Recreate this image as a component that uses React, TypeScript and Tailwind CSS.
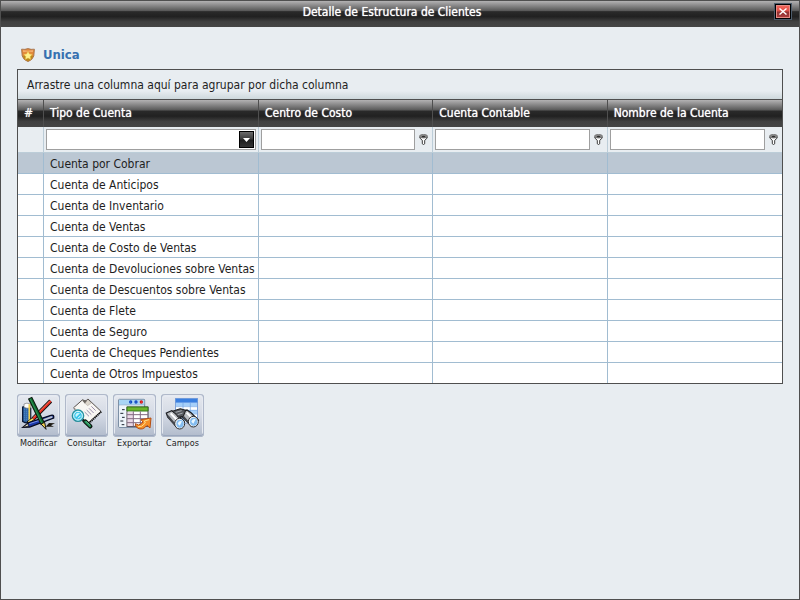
import { useState } from "react";
import type { ReactNode } from "react";
import { clsx } from "clsx";

const ACCOUNTS = [
  "Cuenta por Cobrar",
  "Cuenta de Anticipos",
  "Cuenta de Inventario",
  "Cuenta de Ventas",
  "Cuenta de Costo de Ventas",
  "Cuenta de Devoluciones sobre Ventas",
  "Cuenta de Descuentos sobre Ventas",
  "Cuenta de Flete",
  "Cuenta de Seguro",
  "Cuenta de Cheques Pendientes",
  "Cuenta de Otros Impuestos",
];

const FILTERABLE = ["Centro de Costo", "Cuenta Contable", "Nombre de la Cuenta"];

const GLOSS =
  "bg-[linear-gradient(to_bottom,#b3b2b3_0%,#595959_37%,#2a2a2a_41%,#212121_60%,#414141_80%,#454545_100%)]";

function ShieldIcon() {
  return (
    <svg width="14" height="14" viewBox="0 0 14 14" aria-hidden="true">
      <path d="M.6 1.2 Q4 1.8 7 .6 Q10 1.8 13.4 1.2 L12.8 8 Q11.5 12 7 13.6 Q2.5 12 1.2 8Z" fill="#e28a3c" stroke="#a4704a" strokeWidth=".9" />
      <path d="M2 8 Q7 5 12 8 Q11 11.6 7 13 Q3 11.6 2 8Z" fill="#b98a1c" />
      <path d="M2 2.3 Q7 3 12 2.3 L11.8 4 Q7 3 2.2 4Z" fill="#f4b478" />
      <path d="M7 3.2 L8.4 6 L11.3 6.4 L9.2 8.5 L9.7 11.4 L7 10 L4.3 11.4 L4.8 8.5 L2.7 6.4 L5.6 6Z" fill="#fff38f" stroke="#e8b73a" strokeWidth=".4" />
    </svg>
  );
}

function FunnelIcon() {
  return (
    <svg width="9" height="11" viewBox="0 0 9 11" aria-hidden="true">
      <path d="M.7 3 Q1 5 3.3 6.3 V9.8 L4.5 10.5 L5.7 9.8 V6.3 Q8 5 8.3 3Z" fill="#fff" stroke="#3a3a3a" />
      <ellipse cx="4.5" cy="2.2" rx="4" ry="1.8" fill="#8a8a8a" stroke="#6c6c6c" strokeWidth=".8" />
      <path d="M2.5 2.4 Q4.5 4.2 6.5 2.4 Q4.5 1 2.5 2.4Z" fill="#2c2c2c" />
    </svg>
  );
}

function EditIcon() {
  return (
    <svg width="43" height="43" viewBox="9 8 129 129" aria-hidden="true">
      <path d="M26 47 Q38 42 50 50 L50 92 Q38 98 26 90Z" fill="#2c62a6" stroke="#0a1a3a" strokeWidth="4" />
      <path d="M31 52V90M37 52V92M43 54V92" stroke="#79b8e8" strokeWidth="2" strokeDasharray="3 3" />
      <path d="M30 38 Q38 33 49 38 V50 Q38 52 30 48Z" fill="#fff" stroke="#777" strokeWidth="2" />
      <path d="M46 39V86" stroke="#f4cf4a" strokeWidth="5" />
      <path d="M110 29 L57 83" stroke="#111" strokeWidth="12" />
      <path d="M110 29 L57 83" stroke="#ee2f22" strokeWidth="7" />
      <path d="M107 29 L58 78" stroke="#ff9179" strokeWidth="2" />
      <path d="M57 83 L40 95" stroke="#111" strokeWidth="10" />
      <path d="M57 83 L43 92" stroke="#f6df62" strokeWidth="5" />
      <path d="M27 108 L44 94 L111 72 Q121 69 119 80 L47 107Z" fill="#1a38a8" stroke="#060a20" strokeWidth="4" />
      <path d="M83 85 L111 75 Q118 74 115 79 L86 90Z" fill="#c2c7cf" />
      <path d="M46 97 L84 85" stroke="#7892ea" strokeWidth="3" />
      <path d="M27 108 L41 97 L44 104Z" fill="#f1e9cd" stroke="#111" strokeWidth="2" />
      <path d="M95 106 L105 95 L123 96 L111 102 L120 106Z" fill="#1c1812" />
      <path d="M48 19 L87 99" stroke="#0a120a" strokeWidth="14" />
      <path d="M49 21 L87 99" stroke="#0f6a30" strokeWidth="8" />
      <path d="M49 23 L84 97" stroke="#3ca468" strokeWidth="2" />
      <path d="M81 98 L92 93 L96 114Z" fill="#f5d34f" stroke="#111" strokeWidth="3" />
    </svg>
  );
}

function ConsultIcon() {
  return (
    <svg width="43" height="43" viewBox="9 8 129 129" aria-hidden="true">
      <path d="M35 49 L62 25 L70 30 L78 23 L117 60 L79 94 L64 89Z" fill="#f8f6f2" stroke="#57514e" strokeWidth="3" />
      <path d="M60 27 L69 37 L78 30 L70 26Z" fill="#6b655f" />
      <path d="M77 25 L88 35 L77 43 L69 36Z" fill="#ddd6cc" stroke="#8a817a" strokeWidth="1" />
      <path d="M118 61 L80 97" stroke="#101010" strokeWidth="5" strokeDasharray="4 2" />
      <path d="M88 45 L101 58M81 51 L95 65M74 56 L88 70M68 62 L81 75" stroke="#9a8eae" strokeWidth="3" />
      <path d="M37 49 L64 73" stroke="#d8d0c6" strokeWidth="3" />
      <path d="M59 83 L70 93" stroke="#222" strokeWidth="8" />
      <path d="M70 91 L85 105" stroke="#0b1a12" strokeWidth="13" strokeLinecap="round" />
      <path d="M70 91 L84 104" stroke="#25955b" strokeWidth="6" strokeLinecap="round" />
      <path d="M72 90 L83 100" stroke="#86dcad" strokeWidth="2" />
      <circle cx="48" cy="73" r="17" fill="#5ad3f0" stroke="#2a8f9c" strokeWidth="4" />
      <circle cx="48" cy="73" r="13" fill="#3cc6ec" stroke="#e3f8fb" strokeWidth="3" />
      <path d="M40 71 Q45 60 54 66 L42 78Z" fill="#c5f5fb" />
      <path d="M48 81 L56 73" stroke="#fff" strokeWidth="3" />
    </svg>
  );
}

function ExportIcon() {
  return (
    <svg width="43" height="43" viewBox="9 8 129 129" aria-hidden="true">
      <rect x="26" y="24" width="78" height="84" rx="2" fill="#fff" stroke="#6a8098" strokeWidth="3" />
      <path d="M27 25H103V40H27Z" fill="#a9d5f4" />
      <path d="M27 41H103" stroke="#6d93b8" strokeWidth="2" />
      <g fill="#fff" strokeWidth="4">
        <circle cx="62" cy="32" r="3" stroke="#0f49c4" />
        <circle cx="78" cy="32" r="3" stroke="#0f49c4" />
        <circle cx="94" cy="32" r="3" stroke="#dc1616" />
      </g>
      <path d="M28 43H47V106H28Z" fill="#edf4fa" />
      <path d="M36 55H44M31 66H40M36 78H44M31 89H40M35 100H43" stroke="#1c2530" strokeWidth="3" />
      <rect x="51" y="47" width="63" height="58" fill="#fff" stroke="#45394a" strokeWidth="3" />
      <path d="M51 47H114V59H51Z" fill="#6db52c" stroke="#357a1a" strokeWidth="3" />
      <path d="M53 61H69V104H53Z" fill="#ead8e6" />
      <path d="M51 70H114M51 82H114M51 94H114M70 60V105M91 60V105" stroke="#836a82" strokeWidth="3" />
      <path d="M76 97 Q86 105 94 97 L99 92 L93 85 L123 80 L120 110 L111 102 Q98 119 82 110 Q75 104 76 97Z" fill="#f58f28" stroke="#b54e12" strokeWidth="3" />
      <path d="M84 106 Q95 109 106 95 L103 89 L117 85" fill="none" stroke="#ffdf8c" strokeWidth="3" />
    </svg>
  );
}

function FieldsIcon() {
  return (
    <svg width="43" height="43" viewBox="6 8 129 129" aria-hidden="true">
      <rect x="50" y="22" width="65" height="73" fill="#fff" stroke="#4c7fce" strokeWidth="2" />
      <path d="M50 22H115V34H50Z" fill="#3a7fe0" />
      <path d="M51 35H114V45H51ZM51 57H114V67H51ZM51 79H114V89H51Z" fill="#a5cff9" />
      <path d="M50 46H115M50 57H115M50 68H115M50 79H115M72 34V94M94 34V94" stroke="#6ea2e4" strokeWidth="2" />
      <path d="M22 65 L38 58 L51 65 L76 91 L54 108 L26 77Z" fill="#b9bcc0" stroke="#1e2024" strokeWidth="4" />
      <path d="M68 60 L84 56 L97 65 L118 87 L99 105 L77 83 L62 71Z" fill="#b9bcc0" stroke="#1e2024" strokeWidth="4" />
      <path d="M40 60 L64 52 L80 57 L73 75 L58 78 L51 69Z" fill="#54575c" stroke="#1a1a1a" strokeWidth="3" />
      <path d="M35 66 L58 90M83 64 L100 81" stroke="#fff" strokeWidth="6" />
      <path d="M26 74 L50 102M72 75 L90 96" stroke="#44474d" strokeWidth="6" />
      <path d="M50 63 L68 58M56 70 L71 65" stroke="#aaaeb3" strokeWidth="3" />
      <ellipse cx="62" cy="97" rx="15" ry="16" fill="#f0f2f4" stroke="#2b2e33" strokeWidth="3" />
      <ellipse cx="63" cy="97" rx="11" ry="12" fill="#83bcf0" />
      <ellipse cx="103" cy="91" rx="15" ry="16" fill="#f0f2f4" stroke="#2b2e33" strokeWidth="3" />
      <ellipse cx="104" cy="91" rx="11" ry="12" fill="#83bcf0" />
      <path d="M56 97 Q59 86 69 90 L62 103ZM97 91 Q100 80 110 84 L103 97Z" fill="#eaf7ff" />
    </svg>
  );
}

const ACTIONS: Array<{ label: string; icon: ReactNode }> = [
  { label: "Modificar", icon: <EditIcon /> },
  { label: "Consultar", icon: <ConsultIcon /> },
  { label: "Exportar", icon: <ExportIcon /> },
  { label: "Campos", icon: <FieldsIcon /> },
];

function HeaderCell({ children }: { children: ReactNode }) {
  return (
    <th
      scope="col"
      className="h-[27px] border-r border-[#4f4f4f] p-0 pb-0.5 pl-1.5 text-left font-normal text-white [text-shadow:0_0_1px_#fff] last:border-r-0"
    >
      {children}
    </th>
  );
}

function FilterCell({ column }: { column: string }) {
  return (
    <td className="h-[26px] border-r border-b border-[#bccdd8] p-0 last:border-r-0">
      <div className="flex items-center pl-0.5">
        <input
          type="text"
          aria-label={`Filtrar ${column}`}
          className="h-[21px] min-w-0 flex-1 border border-[#9f9f9f] bg-white px-1 outline-none"
        />
        <button type="button" aria-label={`Condición de ${column}`} className="flex h-[21px] w-[17px] items-center justify-center">
          <FunnelIcon />
        </button>
      </div>
    </td>
  );
}

export default function App() {
  const [selected, setSelected] = useState(0);

  return (
    <div className="flex min-h-screen flex-col border border-[#4f4f4f] bg-[#e8edf1] font-['DejaVu_Sans_Condensed','DejaVu_Sans',sans-serif] text-[12px] leading-4 text-[#1e1e1e]">
      {/* Title bar */}
      <header className={clsx("flex h-[26px] items-start pr-[7px] pl-px", GLOSS)}>
        <h1 className="flex-1 pt-[3px] pl-2 text-center text-white [text-shadow:0_0_1px_#fff]">
          Detalle de Estructura de Clientes
        </h1>
        <button
          type="button"
          aria-label="Cerrar"
          className="mt-0.5 h-[17px] w-[18px] border border-[#4c5c6c] bg-black p-px"
        >
          <span className="flex h-full w-full items-center justify-center border border-[#e58a84] bg-[linear-gradient(to_bottom,#f0655a_0%,#dc4d45_48%,#8e3030_52%,#a83c3c_100%)]">
            <svg width="8" height="7" viewBox="0 0 8 7" aria-hidden="true">
              <path d="M.5 .5 L7.5 6.5 M7.5 .5 L.5 6.5" stroke="#fff" strokeWidth="1.4" />
            </svg>
          </span>
        </button>
      </header>

      <main className="flex-1 px-4 pt-5">
        <div className="flex items-center gap-2 pb-1.5 pl-1">
          <ShieldIcon />
          <h2 className="text-[13px] font-bold text-[#3670b0]">Unica</h2>
        </div>

        {/* Grid */}
        <section className="border border-[#4f4f4f]">
          <div className="flex h-[30px] items-center border-b border-[#4f4f4f] bg-[linear-gradient(to_bottom,#e8edf1_72%,#ced8dc_100%)] pl-[9px]">
            Arrastre una columna aquí para agrupar por dicha columna
          </div>
          <table className="w-full table-fixed border-separate border-spacing-0">
            <colgroup>
              <col className="w-[26px]" />
              <col className="w-[215px]" />
              <col />
              <col />
              <col />
            </colgroup>
            <thead>
              <tr className={GLOSS}>
                <HeaderCell>#</HeaderCell>
                <HeaderCell>Tipo de Cuenta</HeaderCell>
                {FILTERABLE.map((column) => (
                  <HeaderCell key={column}>{column}</HeaderCell>
                ))}
              </tr>
            </thead>
            <tbody>
              <tr>
                <td className="h-[26px] border-r border-b border-[#bccdd8] p-0" />
                <td className="h-[26px] border-r border-b border-[#bccdd8] p-0 px-0.5">
                  <div className="relative">
                    <select
                      aria-label="Filtrar Tipo de Cuenta"
                      className="block h-[21px] w-full appearance-none border border-[#9f9f9f] bg-white px-1 outline-none"
                    >
                      <option value=""></option>
                      {ACCOUNTS.map((name) => (
                        <option key={name}>{name}</option>
                      ))}
                    </select>
                    <span className="pointer-events-none absolute top-0.5 right-0.5 flex h-[17px] w-[15px] items-center justify-center border border-black bg-[linear-gradient(to_bottom,#6b6b6b_0%,#3b3b3b_45%,#1e1e1e_55%,#333_100%)]">
                      <svg width="7" height="4" viewBox="0 0 7 4" aria-hidden="true">
                        <path d="M0 0H7L3.5 4Z" fill="#fff" />
                      </svg>
                    </span>
                  </div>
                </td>
                {FILTERABLE.map((column) => (
                  <FilterCell key={column} column={column} />
                ))}
              </tr>
              {ACCOUNTS.map((name, i) => {
                const cell = clsx(
                  "border-r border-[#a1bcd1] p-0 last:border-r-0",
                  i < ACCOUNTS.length - 1 ? "h-[21px] border-b" : "h-[20px]",
                );
                return (
                  <tr
                    key={name}
                    onClick={() => setSelected(i)}
                    className={i === selected ? "bg-[#bbc7d3]" : "bg-white"}
                  >
                    <td className={cell} />
                    <td className={clsx(cell, "truncate pt-0.5 pl-1.5")}>{name}</td>
                    <td className={cell} />
                    <td className={cell} />
                    <td className={cell} />
                  </tr>
                );
              })}
            </tbody>
          </table>
        </section>

        {/* Actions */}
        <div className="flex gap-[5px] pt-2.5">
          {ACTIONS.map(({ label, icon }) => (
            <button key={label} type="button" className="flex w-[43px] flex-col items-center text-[9px] leading-3">
              <span className="h-[43px] w-[43px] overflow-hidden rounded-[4px] bg-[linear-gradient(to_bottom,#e6e9ef_0%,#d3d9e4_50%,#b0bacb_100%)] shadow-[inset_0_0_0_1px_#b0b9ca,inset_0_-1px_0_1px_#9aa7bd,inset_0_1px_0_2px_#e6eaf1]">
                {icon}
              </span>
              {label}
            </button>
          ))}
        </div>
      </main>
    </div>
  );
}
